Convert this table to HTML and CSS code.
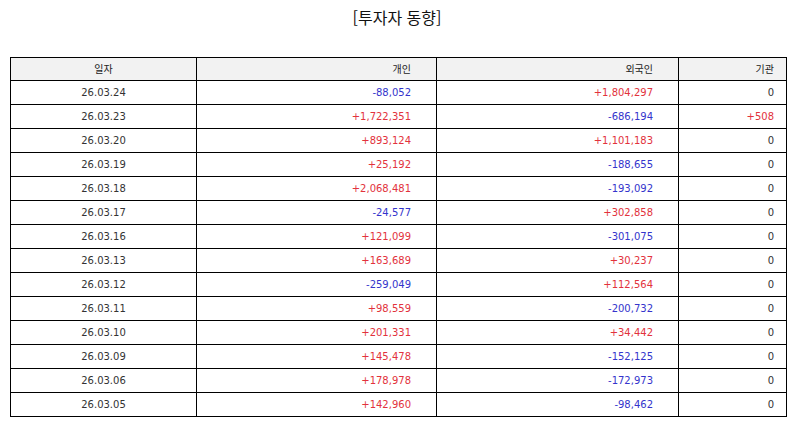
FILE: index.html
```html
<!DOCTYPE html>
<html lang="ko">
<head>
<meta charset="utf-8">
<title>투자자 동향</title>
<link rel="stylesheet" href="styles.css">
</head>
<body>
<h1 class="title">[투자자 동향]</h1>
<table class="grid">
  <colgroup>
    <col class="c-date"><col class="c-ind"><col class="c-for"><col class="c-inst">
  </colgroup>
  <thead>
    <tr><th class="center">일자</th><th class="num">개인</th><th class="num">외국인</th><th class="num last">기관</th></tr>
  </thead>
  <tbody>
    <tr><td class="center">26.03.24</td><td class="num down">-88,052</td><td class="num up">+1,804,297</td><td class="num last">0</td></tr>
    <tr><td class="center">26.03.23</td><td class="num up">+1,722,351</td><td class="num down">-686,194</td><td class="num last up">+508</td></tr>
    <tr><td class="center">26.03.20</td><td class="num up">+893,124</td><td class="num up">+1,101,183</td><td class="num last">0</td></tr>
    <tr><td class="center">26.03.19</td><td class="num up">+25,192</td><td class="num down">-188,655</td><td class="num last">0</td></tr>
    <tr><td class="center">26.03.18</td><td class="num up">+2,068,481</td><td class="num down">-193,092</td><td class="num last">0</td></tr>
    <tr><td class="center">26.03.17</td><td class="num down">-24,577</td><td class="num up">+302,858</td><td class="num last">0</td></tr>
    <tr><td class="center">26.03.16</td><td class="num up">+121,099</td><td class="num down">-301,075</td><td class="num last">0</td></tr>
    <tr><td class="center">26.03.13</td><td class="num up">+163,689</td><td class="num up">+30,237</td><td class="num last">0</td></tr>
    <tr><td class="center">26.03.12</td><td class="num down">-259,049</td><td class="num up">+112,564</td><td class="num last">0</td></tr>
    <tr><td class="center">26.03.11</td><td class="num up">+98,559</td><td class="num down">-200,732</td><td class="num last">0</td></tr>
    <tr><td class="center">26.03.10</td><td class="num up">+201,331</td><td class="num up">+34,442</td><td class="num last">0</td></tr>
    <tr><td class="center">26.03.09</td><td class="num up">+145,478</td><td class="num down">-152,125</td><td class="num last">0</td></tr>
    <tr><td class="center">26.03.06</td><td class="num up">+178,978</td><td class="num down">-172,973</td><td class="num last">0</td></tr>
    <tr><td class="center">26.03.05</td><td class="num up">+142,960</td><td class="num down">-98,462</td><td class="num last">0</td></tr>
  </tbody>
</table>
</body>
</html>
```
FILE: styles.css
```css
html, body {
  margin: 0;
  padding: 0;
  background: #ffffff;
}
body {
  font-family: "DejaVu Sans", "Noto Sans CJK KR", sans-serif;
  color: #333333;
}
.title {
  margin: 0;
  height: 57px;
  padding-top: 5px;
  box-sizing: border-box;
  text-align: center;
  font-family: "Noto Sans CJK KR", sans-serif;
  font-size: 16px;
  font-weight: normal;
  line-height: 24px;
  color: #111111;
}
.grid {
  margin-left: 10px;
  width: 776px;
  border-collapse: collapse;
  table-layout: fixed;
  font-size: 10px;
}
.c-date { width: 186px; }
.c-ind { width: 240px; }
.c-for { width: 242px; }
.c-inst { width: 108px; }
.grid th, .grid td {
  border: 1px solid #000000;
  height: 24px;
  padding: 0 25px 0 6px;
  box-sizing: border-box;
  line-height: 14px;
  font-weight: normal;
  white-space: nowrap;
}
.grid th {
  font-family: "Noto Sans CJK KR", sans-serif;
  color: #222222;
}
.grid thead th {
  background: #f2f2f2;
  height: 23px;
}
.grid .center { text-align: center; padding: 0; }
.grid .num { text-align: right; }
.grid .last { padding-right: 12px; }
.up { color: #e2323c; }
.down { color: #3434cc; }
```
